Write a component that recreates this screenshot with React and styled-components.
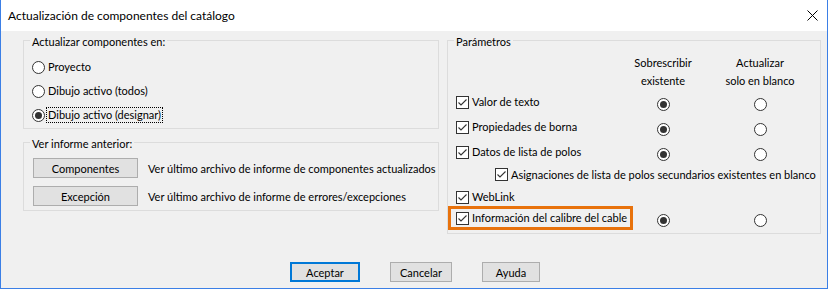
import React from 'react';
import styled, { createGlobalStyle } from 'styled-components';

const GlobalStyle = createGlobalStyle`
    html, body {
        margin: 0;
        padding: 0;
        background: #ffffff;
    }

    body {
        font-family: Lato, "Liberation Sans", sans-serif;
        font-size: 11px;
        color: #000;
    }
`;

const Window = styled.div`
    width: 828px;
    height: 289px;
    box-sizing: border-box;
    border: 1px solid #3b7fe6;
    border-top: none;
    background-color: #f0f0f0;
    display: flex;
    flex-direction: column;
`;

const TitleBar = styled.div`
    flex: 0 0 31px;
    display: flex;
    align-items: center;
    justify-content: space-between;
    padding: 0 9px 0 7px;
    background-color: #fff;
`;

const Title = styled.span`
    font-size: 12px;
`;

const Main = styled.div`
    display: flex;
    align-items: flex-start;
    gap: 8px;
    padding: 0 6px 0 22px;
`;

const Column = styled.div`
    width: ${p => p.width}px;
    display: flex;
    flex-direction: column;
    gap: 4px;
`;

const Group = styled.fieldset`
    margin: 0;
    min-width: 0;
    padding: 0 8px;
    border: 1px solid #dcdcdc;
`;

const Legend = styled.legend`
    padding: 4px 2px 0;
    margin-left: -2px;
    line-height: 14px;
`;

const RadioList = styled.div`
    padding: 6px 0 1px;
    display: flex;
    flex-direction: column;
`;

const RadioRow = styled.label`
    height: 24px;
    display: flex;
    align-items: center;
    gap: 2px;
`;

const OptionText = styled.span`
    padding: 0 1px;
    line-height: 14px;
    outline: ${p => (p.focused ? '1px dotted #000' : 'none')};
`;

const ReportList = styled.div`
    padding: 7px 0 4px 1px;
    display: flex;
    flex-direction: column;
    gap: 8px;
`;

const ReportRow = styled.div`
    display: flex;
    align-items: center;
    gap: 10px;
    white-space: nowrap;
`;

const Button = styled.button`
    flex: 0 0 auto;
    width: ${p => p.width}px;
    height: 20px;
    box-sizing: border-box;
    padding: 0;
    font-family: inherit;
    font-size: 11px;
    color: #000;
    background-color: #e1e1e1;
    border: ${p => (p.primary ? '2px solid #0078d7' : '1px solid #adadad')};
`;

const ParamsBody = styled.div`
    padding: 5px 0 6px;
`;

const ParamRow = styled.div`
    display: grid;
    grid-template-columns: 159px 96px 98px;
    align-items: center;
    height: ${p => p.h}px;
`;

const HeaderCell = styled.div`
    grid-column: ${p => p.col};
    text-align: center;
    line-height: 18px;
`;

const CheckLabel = styled.label`
    display: inline-flex;
    align-items: center;
    gap: 3px;
    justify-self: start;
    white-space: nowrap;
    padding: 2px 3px 2px 5px;
    margin-left: ${p => (p.indent || 0) - 5}px;
    line-height: 14px;
    grid-column: ${p => (p.span ? '1 / -1' : 'auto')};
    outline: ${p => (p.highlight ? '3px solid #e8720c' : 'none')};
`;

const RadioCell = styled.div`
    display: flex;
    justify-content: center;
    margin-top: 4px;
`;

const Footer = styled.div`
    display: flex;
    justify-content: center;
    gap: 30px;
    padding: 28px 0 0 2px;
`;

function CloseIcon() {
    return (
        <svg width="11" height="11" viewBox="0 0 11 11">
            <path d="M0.5 0.5 L10.5 10.5 M10.5 0.5 L0.5 10.5" stroke="#000" strokeWidth="1" fill="none" />
        </svg>
    );
}

function Radio({checked}) {
    return (
        <svg width="13" height="13" viewBox="0 0 13 13">
            <circle cx="6.5" cy="6.5" r="6" fill="#fff" stroke="#333" strokeWidth="1" />
            {checked && <circle cx="6.5" cy="6.5" r="3.5" fill="#333" />}
        </svg>
    );
}

function Checkbox() {
    return (
        <svg width="13" height="13" viewBox="0 0 13 13">
            <rect x="0.5" y="0.5" width="12" height="12" fill="#fff" stroke="#333" strokeWidth="1" />
            <path d="M2.5 6.5 L5 9 L10.5 3.5" stroke="#333" strokeWidth="1.1" fill="none" />
        </svg>
    );
}

const scopes = [
    {label: 'Proyecto'},
    {label: 'Dibujo activo (todos)'},
    {label: 'Dibujo activo (designar)', checked: true},
];

const reports = [
    {button: 'Componentes', text: 'Ver último archivo de informe de componentes actualizados'},
    {button: 'Excepción', text: 'Ver último archivo de informe de errores/excepciones'},
];

const params = [
    {label: 'Valor de texto', h: 24, radios: true},
    {label: 'Propiedades de borna', h: 26, radios: true},
    {label: 'Datos de lista de polos', h: 24, radios: true},
    {label: 'Asignaciones de lista de polos secundarios existentes en blanco', h: 21, indent: 39, span: true},
    {label: 'WebLink', h: 24},
    {label: 'Información del calibre del cable', h: 18, radios: true, highlight: true},
];

function App() {
    return (
        <Window>
            <GlobalStyle />
            <TitleBar>
                <Title>Actualización de componentes del catálogo</Title>
                <CloseIcon />
            </TitleBar>
            <Main>
                <Column width={416}>
                    <Group>
                        <Legend>Actualizar componentes en:</Legend>
                        <RadioList>
                            {scopes.map(s => (
                                <RadioRow key={s.label}>
                                    <Radio checked={s.checked} />
                                    <OptionText focused={s.checked}>{s.label}</OptionText>
                                </RadioRow>
                            ))}
                        </RadioList>
                    </Group>
                    <Group>
                        <Legend>Ver informe anterior:</Legend>
                        <ReportList>
                            {reports.map(r => (
                                <ReportRow key={r.button}>
                                    <Button width={105}>{r.button}</Button>
                                    <span>{r.text}</span>
                                </ReportRow>
                            ))}
                        </ReportList>
                    </Group>
                </Column>
                <Column width={374}>
                    <Group>
                        <Legend>Parámetros</Legend>
                        <ParamsBody>
                            <ParamRow h={36}>
                                <HeaderCell col={2}>Sobrescribir<br />existente</HeaderCell>
                                <HeaderCell col={3}>Actualizar<br />solo en blanco</HeaderCell>
                            </ParamRow>
                            {params.map(p => (
                                <ParamRow key={p.label} h={p.h}>
                                    <CheckLabel indent={p.indent} span={p.span} highlight={p.highlight}>
                                        <Checkbox />
                                        {p.label}
                                    </CheckLabel>
                                    {p.radios && (
                                        <>
                                            <RadioCell><Radio checked /></RadioCell>
                                            <RadioCell><Radio /></RadioCell>
                                        </>
                                    )}
                                </ParamRow>
                            ))}
                        </ParamsBody>
                    </Group>
                </Column>
            </Main>
            <Footer>
                <Button width={70} primary>Aceptar</Button>
                <Button width={62}>Cancelar</Button>
                <Button width={58}>Ayuda</Button>
            </Footer>
        </Window>
    );
}

export default App;
